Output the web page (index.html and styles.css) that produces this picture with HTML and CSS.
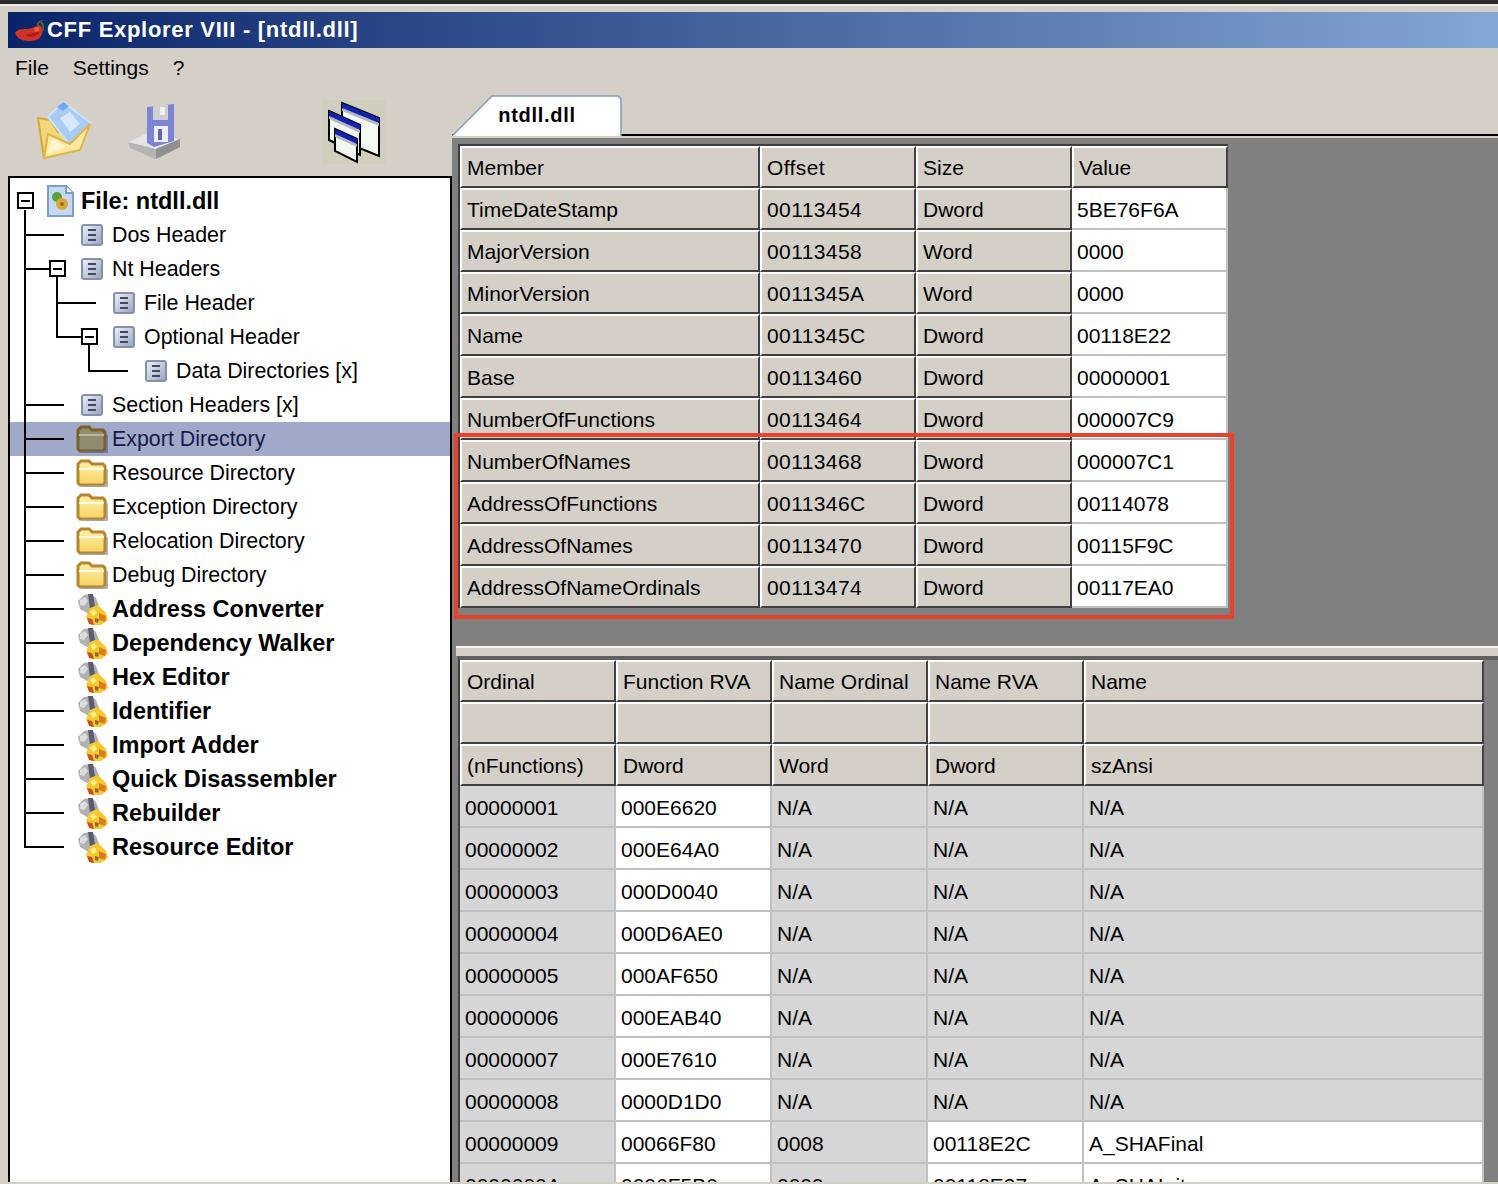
FILE: index.html
```html
<!DOCTYPE html>
<html lang="en">
<head>
    <meta charset="UTF-8">
    <title>CFF Explorer VIII - [ntdll.dll]</title>
    <link rel="stylesheet" href="styles.css">
</head>
<body>

<div class="window">
    <div class="titlebar">
        <svg class="chili" viewBox="0 0 32 24" width="32" height="24">
            <path d="M24 9 C25 4 28 2 30 3 C29 2 25 1 23 6 Z M26 3 C30 4 31 10 29 14 L28 13 C29 9 28 6 26 5 Z" fill="#4f6b2c"/>
            <path d="M1 15 C3 11 8 11 13 11 C18 11 21 8 25 7 C28 8 30 13 27 18 C25 22 20 23 14 23 C8 23 3 20 1 15 Z" fill="#d03428"/>
            <path d="M10 16 C15 17 20 15 24 13 L25 16 C20 19 14 20 10 16 Z" fill="#a82018"/>
            <path d="M20 10 L25 9 L25 13 L21 14 Z" fill="#e8604c"/>
        </svg>
        <span class="title-text">CFF Explorer VIII - [ntdll.dll]</span>
    </div>

    <div class="menubar">
        <span class="menu-item">File</span>
        <span class="menu-item">Settings</span>
        <span class="menu-item">?</span>
    </div>

    <div class="workspace">
        <div class="left-col">
            <div class="toolbar">
                <svg class="tool-open" viewBox="0 0 58 60" width="58" height="60">
                    <path d="M2 18 L14 20 L22 32 L54 24 L42 50 L8 58 Z" fill="#f3d77c" stroke="#d8a838" stroke-width="2"/>
                    <path d="M27 2 L55 23 L34 45 L12 17 Z" fill="#a8cdf5" stroke="#cfe2fa" stroke-width="2"/>
                    <path d="M27 2 L33 6 L27 11 L21 7 Z" fill="#6fa8ee"/>
                    <path d="M24 18 L34 12 L44 24 L34 32 Z" fill="#d8e8fa"/>
                    <path d="M8 58 L12 34 L34 44 L54 24 L44 50 Z" fill="#fde9a0" stroke="#e0b448" stroke-width="2"/>
                    <path d="M12 54 L16 38 L30 46 Z" fill="#fff6cf"/>
                </svg>
                <svg class="tool-save" viewBox="0 0 60 60" width="60" height="60">
                    <path d="M2 41 L24 31 L54 38 L54 46 L29 58 L4 47 Z" fill="#b4b4b4"/>
                    <path d="M2 41 L24 31 L54 38 L30 48 Z" fill="#e4e4e4"/>
                    <path d="M30 48 L54 38 L54 46 L30 58 Z" fill="#8f8f8f"/>
                    <path d="M21 6 L48 3 L48 40 L28 46 L21 42 Z" fill="#7c84d4"/>
                    <rect x="27" y="4" width="15" height="15" fill="#cfcfcf"/>
                    <rect x="34" y="6" width="5" height="8" fill="#f0f0f0"/>
                    <rect x="28" y="25" width="14" height="16" fill="#eeeef8"/>
                    <rect x="32" y="28" width="4" height="11" fill="#6068a8"/>
                </svg>
                <svg class="tool-windows" viewBox="0 0 64 64" width="64" height="64">
                    <rect width="64" height="64" fill="#d0cfbd"/>
                    <g stroke="#000" stroke-width="2">
                        <path d="M20 3 L57 18 L57 56 L20 41 Z" fill="#f2f8f4"/>
                        <path d="M20 8 L57 23 V26 L20 11 Z" fill="#b8b8b8" stroke="none"/>
                        <path d="M20 3 L57 18 L57 23 L20 8 Z" fill="#1224b4" stroke="none"/>
                        <path d="M7 11 L38 25 L38 55 L7 40 Z" fill="#f2f8f4"/>
                        <path d="M7 16 L38 30 V33 L7 19 Z" fill="#b8b8b8" stroke="none"/>
                        <path d="M7 11 L38 25 L38 30 L7 16 Z" fill="#1224b4" stroke="none"/>
                        <path d="M13 29 L35 39 L35 62 L13 51 Z" fill="#f2f8f4"/>
                        <path d="M13 34 L35 44 V47 L13 37 Z" fill="#b8b8b8" stroke="none"/>
                        <path d="M13 29 L35 39 L35 44 L13 34 Z" fill="#1224b4" stroke="none"/>
                    </g>
                </svg>
            </div>

            <div class="tree">
                <svg class="tree-lines" viewBox="10 178 440 1004" width="440" height="1004">
                    <defs>
                        <linearGradient id="listFill" x1="0" y1="0" x2="1" y2="1">
                            <stop offset="0" stop-color="#eef1f8"/>
                            <stop offset="1" stop-color="#97a4c0"/>
                        </linearGradient>
                        <linearGradient id="folderFill" x1="0" y1="0" x2="0" y2="1">
                            <stop offset="0" stop-color="#fff3b0"/>
                            <stop offset="1" stop-color="#f8d060"/>
                        </linearGradient>
                        <symbol id="icoList" viewBox="0 0 22 22">
                            <rect x="1" y="1" width="20" height="20" rx="2" fill="url(#listFill)" stroke="#8391ae" stroke-width="2"/>
                            <path d="M7 6 H15 M7 11 H15 M7 16 H15" stroke="#3e4a64" stroke-width="2"/>
                        </symbol>
                        <symbol id="icoFolder" viewBox="0 0 32 28">
                            <path d="M2 24 V5 L5 2 H13 L16 5 H27 L29 7 V24 L27 26 H4 Z" fill="url(#folderFill)" stroke="#b8862a" stroke-width="3"/>
                            <path d="M3 10 H28" stroke="#fffbe0" stroke-width="2"/>
                            <path d="M5 27 H31 V10" fill="none" stroke="#9a9a9a" stroke-width="1.5"/>
                        </symbol>
                        <symbol id="icoFolderSel" viewBox="0 0 32 28">
                            <path d="M2 24 V5 L5 2 H13 L16 5 H27 L29 7 V24 L27 26 H4 Z" fill="#8f8c72" stroke="#7a5f26" stroke-width="3"/>
                            <path d="M3 10 H28" stroke="#b8b89a" stroke-width="2"/>
                            <path d="M5 27 H31 V10" fill="none" stroke="#6c708c" stroke-width="1.5"/>
                        </symbol>
                        <symbol id="icoTool" viewBox="0 0 34 34">
                            <path d="M3 9 L9 3 L16 2 L21 6 L24 14 L20 19 L12 21 L5 17 Z" fill="#b0b0b0"/>
                            <path d="M5 8 L10 5 L13 9 L9 14 L5 13 Z" fill="#dcdcdc"/>
                            <path d="M13 2 H18 L20 14 L15 17 Z" fill="#5c5c70"/>
                            <path d="M11 25 L15 16 L23 13 L31 21 L33 28 L26 33 L16 33 Z" fill="#f6c830"/>
                            <path d="M15 20 L19 17 L22 21 L18 24 Z" fill="#fff08c"/>
                            <path d="M24 21 L31 24 L30 30 L24 28 Z" fill="#e07a20"/>
                            <path d="M12 26 L17 27 L19 33 L14 32 Z" fill="#c8501c"/>
                            <path d="M20 26 L24 27 L23 31 L20 30 Z" fill="#8c6a3c"/>
                        </symbol>
                    </defs>
                    <g stroke="#000" stroke-width="2" fill="none">
                        <path d="M25 210 V848 M26 847 H64 M26 235 H64 M26 269 H49 M26 405 H64 M26 439 H64 M26 473 H64 M26 507 H64 M26 541 H64 M26 575 H64 M26 609 H64 M26 643 H64 M26 677 H64 M26 711 H64 M26 745 H64 M26 779 H64 M26 813 H64"/>
                        <path d="M57 277 V338 M58 303 H96 M58 337 H81"/>
                        <path d="M89 345 V372 M90 371 H128"/>
                        <rect x="18" y="193" width="15" height="15" fill="#fff"/>
                        <rect x="50" y="261" width="15" height="15" fill="#fff"/>
                        <rect x="82" y="329" width="15" height="15" fill="#fff"/>
                        <path d="M21 201 H30 M53 269 H62 M85 337 H94"/>
                    </g>
                </svg>

                <div class="tree-row root-row">
                    <svg class="ico-file" viewBox="0 0 28 32" width="28" height="32">
                        <path d="M2 1 H20 L27 8 V31 H2 Z" fill="#c4d8f2" stroke="#7f9cc8" stroke-width="2"/>
                        <path d="M20 1 V8 H27" fill="#f4f8fe" stroke="#7f9cc8" stroke-width="2"/>
                        <circle cx="11" cy="12" r="5" fill="#5ca03c"/>
                        <circle cx="16" cy="19" r="6" fill="#d8a838"/>
                        <circle cx="16" cy="19" r="2" fill="#9a6c1c"/>
                    </svg>
                    <span class="tree-label bold">File: ntdll.dll</span>
                </div>
                <div class="tree-row lvl1"><span class="ico-box"><svg width="22" height="22"><use href="#icoList"/></svg></span><span class="tree-label">Dos Header</span></div>
                <div class="tree-row lvl1"><span class="ico-box"><svg width="22" height="22"><use href="#icoList"/></svg></span><span class="tree-label">Nt Headers</span></div>
                <div class="tree-row lvl2"><span class="ico-box"><svg width="22" height="22"><use href="#icoList"/></svg></span><span class="tree-label">File Header</span></div>
                <div class="tree-row lvl2"><span class="ico-box"><svg width="22" height="22"><use href="#icoList"/></svg></span><span class="tree-label">Optional Header</span></div>
                <div class="tree-row lvl3"><span class="ico-box"><svg width="22" height="22"><use href="#icoList"/></svg></span><span class="tree-label">Data Directories [x]</span></div>
                <div class="tree-row lvl1"><span class="ico-box"><svg width="22" height="22"><use href="#icoList"/></svg></span><span class="tree-label">Section Headers [x]</span></div>
                <div class="tree-row lvl1 selected"><span class="ico-box"><svg width="32" height="28"><use href="#icoFolderSel"/></svg></span><span class="tree-label">Export Directory</span></div>
                <div class="tree-row lvl1"><span class="ico-box"><svg width="32" height="28"><use href="#icoFolder"/></svg></span><span class="tree-label">Resource Directory</span></div>
                <div class="tree-row lvl1"><span class="ico-box"><svg width="32" height="28"><use href="#icoFolder"/></svg></span><span class="tree-label">Exception Directory</span></div>
                <div class="tree-row lvl1"><span class="ico-box"><svg width="32" height="28"><use href="#icoFolder"/></svg></span><span class="tree-label">Relocation Directory</span></div>
                <div class="tree-row lvl1"><span class="ico-box"><svg width="32" height="28"><use href="#icoFolder"/></svg></span><span class="tree-label">Debug Directory</span></div>
                <div class="tree-row lvl1"><span class="ico-box"><svg width="34" height="34"><use href="#icoTool"/></svg></span><span class="tree-label bold">Address Converter</span></div>
                <div class="tree-row lvl1"><span class="ico-box"><svg width="34" height="34"><use href="#icoTool"/></svg></span><span class="tree-label bold">Dependency Walker</span></div>
                <div class="tree-row lvl1"><span class="ico-box"><svg width="34" height="34"><use href="#icoTool"/></svg></span><span class="tree-label bold">Hex Editor</span></div>
                <div class="tree-row lvl1"><span class="ico-box"><svg width="34" height="34"><use href="#icoTool"/></svg></span><span class="tree-label bold">Identifier</span></div>
                <div class="tree-row lvl1"><span class="ico-box"><svg width="34" height="34"><use href="#icoTool"/></svg></span><span class="tree-label bold">Import Adder</span></div>
                <div class="tree-row lvl1"><span class="ico-box"><svg width="34" height="34"><use href="#icoTool"/></svg></span><span class="tree-label bold">Quick Disassembler</span></div>
                <div class="tree-row lvl1"><span class="ico-box"><svg width="34" height="34"><use href="#icoTool"/></svg></span><span class="tree-label bold">Rebuilder</span></div>
                <div class="tree-row lvl1"><span class="ico-box"><svg width="34" height="34"><use href="#icoTool"/></svg></span><span class="tree-label bold">Resource Editor</span></div>
            </div>
        </div>

        <div class="right-col">
            <div class="tabstrip">
                <div class="tab">
                    <svg class="tab-shape" viewBox="0 0 170 41" width="170" height="41">
                        <path d="M0 41 L40 1 H166 L169 4 V41" fill="#fff" stroke="#7f9db9" stroke-width="1.5"/>
                    </svg>
                    <span class="tab-label">ntdll.dll</span>
                </div>
            </div>

            <div class="pane">
                <div class="upper">
                    <div class="grid grid-top">
                        <div class="hd">Member</div><div class="hd">Offset</div><div class="hd">Size</div><div class="hd">Value</div>
                        <div class="hd">TimeDateStamp</div><div class="hd">00113454</div><div class="hd">Dword</div><div class="val">5BE76F6A</div>
                        <div class="hd">MajorVersion</div><div class="hd">00113458</div><div class="hd">Word</div><div class="val">0000</div>
                        <div class="hd">MinorVersion</div><div class="hd">0011345A</div><div class="hd">Word</div><div class="val">0000</div>
                        <div class="hd">Name</div><div class="hd">0011345C</div><div class="hd">Dword</div><div class="val">00118E22</div>
                        <div class="hd">Base</div><div class="hd">00113460</div><div class="hd">Dword</div><div class="val">00000001</div>
                        <div class="hd">NumberOfFunctions</div><div class="hd">00113464</div><div class="hd">Dword</div><div class="val">000007C9</div>
                        <div class="hd">NumberOfNames</div><div class="hd">00113468</div><div class="hd">Dword</div><div class="val">000007C1</div>
                        <div class="hd">AddressOfFunctions</div><div class="hd">0011346C</div><div class="hd">Dword</div><div class="val">00114078</div>
                        <div class="hd">AddressOfNames</div><div class="hd">00113470</div><div class="hd">Dword</div><div class="val">00115F9C</div>
                        <div class="hd">AddressOfNameOrdinals</div><div class="hd">00113474</div><div class="hd">Dword</div><div class="val">00117EA0</div>
                    </div>
                    <div class="highlight"></div>
                </div>

                <div class="splitter"></div>

                <div class="lower">
                    <div class="grid grid-bottom">
                        <div class="hd">Ordinal</div><div class="hd">Function RVA</div><div class="hd">Name Ordinal</div><div class="hd">Name RVA</div><div class="hd">Name</div>
                        <div class="hd"></div><div class="hd"></div><div class="hd"></div><div class="hd"></div><div class="hd"></div>
                        <div class="hd">(nFunctions)</div><div class="hd">Dword</div><div class="hd">Word</div><div class="hd">Dword</div><div class="hd">szAnsi</div>

                        <div class="ro">00000001</div><div class="val">000E6620</div><div class="ro">N/A</div><div class="ro">N/A</div><div class="ro">N/A</div>
                        <div class="ro">00000002</div><div class="val">000E64A0</div><div class="ro">N/A</div><div class="ro">N/A</div><div class="ro">N/A</div>
                        <div class="ro">00000003</div><div class="val">000D0040</div><div class="ro">N/A</div><div class="ro">N/A</div><div class="ro">N/A</div>
                        <div class="ro">00000004</div><div class="val">000D6AE0</div><div class="ro">N/A</div><div class="ro">N/A</div><div class="ro">N/A</div>
                        <div class="ro">00000005</div><div class="val">000AF650</div><div class="ro">N/A</div><div class="ro">N/A</div><div class="ro">N/A</div>
                        <div class="ro">00000006</div><div class="val">000EAB40</div><div class="ro">N/A</div><div class="ro">N/A</div><div class="ro">N/A</div>
                        <div class="ro">00000007</div><div class="val">000E7610</div><div class="ro">N/A</div><div class="ro">N/A</div><div class="ro">N/A</div>
                        <div class="ro">00000008</div><div class="val">0000D1D0</div><div class="ro">N/A</div><div class="ro">N/A</div><div class="ro">N/A</div>
                        <div class="ro">00000009</div><div class="val">00066F80</div><div class="ro">0008</div><div class="val">00118E2C</div><div class="val">A_SHAFinal</div>
                        <div class="ro">0000000A</div><div class="val">0006F5B0</div><div class="ro">0009</div><div class="val">00118E37</div><div class="val">A_SHAInit</div>
                    </div>
                </div>
            </div>
        </div>
    </div>
</div>

</body>
</html>
```

FILE: styles.css
```css
html, body {
    height: 100%;
    overflow: hidden;
}
body {
    margin: 0;
    background-color: #2b2b2b;
    font-family: "Liberation Sans", Arial, sans-serif;
    font-size: 21px;
    color: #000;
}
.window {
    box-sizing: border-box;
    height: 1180px;
    margin-top: 4px;
    padding: 6px 0 2px 8px;
    background-color: #d4d0c8;
    border-top: 2px solid #ecebe6;
    display: flex;
    flex-direction: column;
    overflow: hidden;
}
.titlebar {
    flex: none;
    height: 36px;
    display: flex;
    align-items: center;
    background: linear-gradient(to right, #0a246a, #84a6d4);
    color: #fff;
}
.chili {
    flex: none;
    margin: 0 1px 0 6px;
}
.title-text {
    font-weight: bold;
    font-size: 22px;
    letter-spacing: 0.7px;
}
.menubar {
    flex: none;
    height: 40px;
    display: flex;
    align-items: center;
    gap: 24px;
    padding-left: 7px;
}
.workspace {
    flex: 1;
    min-height: 0;
    display: flex;
}
.left-col {
    flex: none;
    width: 444px;
    display: flex;
    flex-direction: column;
}
.toolbar {
    flex: none;
    height: 88px;
    display: flex;
    align-items: flex-start;
    padding-top: 12px;
    box-sizing: border-box;
}
.tool-open {
    margin-left: 28px;
}
.tool-save {
    margin-left: 32px;
    margin-top: 1px;
}
.tool-windows {
    margin-left: 136px;
}
.tree {
    flex: 1;
    position: relative;
    background-color: #fff;
    border-top: 2px solid #000;
    border-left: 2px solid #000;
    border-right: 2px solid #000;
    padding-top: 6px;
    overflow: hidden;
}
.tree-lines {
    position: absolute;
    top: 0;
    left: 0;
    z-index: 1;
}
.tree-row {
    height: 34px;
    display: flex;
    align-items: center;
    gap: 4px;
    white-space: nowrap;
}
.root-row {
    padding-left: 36px;
    gap: 7px;
}
.lvl1 {
    padding-left: 66px;
}
.lvl2 {
    padding-left: 98px;
}
.lvl3 {
    padding-left: 130px;
}
.ico-box {
    flex: none;
    width: 32px;
    height: 34px;
    display: flex;
    align-items: center;
    justify-content: center;
}
.ico-box svg {
    flex: none;
}
.tree-label {
    font-size: 21.4px;
    padding-top: 1px;
}
.tree-label.bold {
    font-weight: bold;
    font-size: 23.5px;
}
.selected {
    background-color: #a0a9c8;
    color: #141c4c;
}
.right-col {
    flex: 1;
    min-width: 0;
    display: flex;
    flex-direction: column;
}
.tabstrip {
    flex: none;
    box-sizing: border-box;
    height: 48px;
    padding-top: 7px;
    border-bottom: 2px solid #000;
}
.tab {
    position: relative;
    width: 170px;
    height: 41px;
    text-align: center;
}
.tab-shape {
    position: absolute;
    top: 0;
    left: 0;
}
.tab-label {
    position: relative;
    display: block;
    padding-top: 9px;
    font-size: 20px;
    font-weight: bold;
    letter-spacing: 0.7px;
}
.pane {
    flex: 1;
    min-height: 0;
    margin-top: 2px;
    background-color: #808080;
    display: flex;
    flex-direction: column;
}
.upper {
    flex: none;
    position: relative;
    box-sizing: border-box;
    height: 508px;
    padding: 6px 0 0 6px;
}
.grid {
    display: grid;
    grid-auto-rows: 42px;
    font-size: 21px;
    line-height: 40px;
}
.grid-top {
    grid-template-columns: 300px 156px 156px 156px;
    width: 768px;
    border-top: 2px solid #404040;
    border-left: 2px solid #404040;
}
.grid-top .hd:nth-child(4n+2) {
    letter-spacing: 0.4px;
}
.grid-bottom {
    grid-template-columns: 156px 156px 156px 156px 400px;
    width: 1024px;
}
.hd, .val, .ro {
    box-sizing: border-box;
    white-space: nowrap;
    overflow: hidden;
}
.hd {
    background-color: #d4d0c8;
    padding-left: 5px;
    border-top: 2px solid #fff;
    border-left: 2px solid #fff;
    border-right: 2px solid #404040;
    border-bottom: 2px solid #404040;
}
.val, .ro {
    padding-left: 5px;
    line-height: 44px;
    border-right: 2px solid #c0c0c0;
    border-bottom: 2px solid #c0c0c0;
}
.val {
    background-color: #fff;
}
.ro {
    background-color: #d6d6d6;
}
.highlight {
    position: absolute;
    box-sizing: border-box;
    left: 2px;
    top: 295px;
    width: 780px;
    height: 186px;
    border: 4px solid #e8432a;
}
.splitter {
    flex: none;
    box-sizing: border-box;
    height: 10px;
    margin-left: 4px;
    background-color: #d4d0c8;
    border-top: 2px solid #f4f2ec;
}
.lower {
    flex: 1;
    min-height: 0;
    margin-left: 6px;
    border-top: 4px solid #606060;
    border-left: 2px solid #404040;
    overflow: hidden;
}
```
